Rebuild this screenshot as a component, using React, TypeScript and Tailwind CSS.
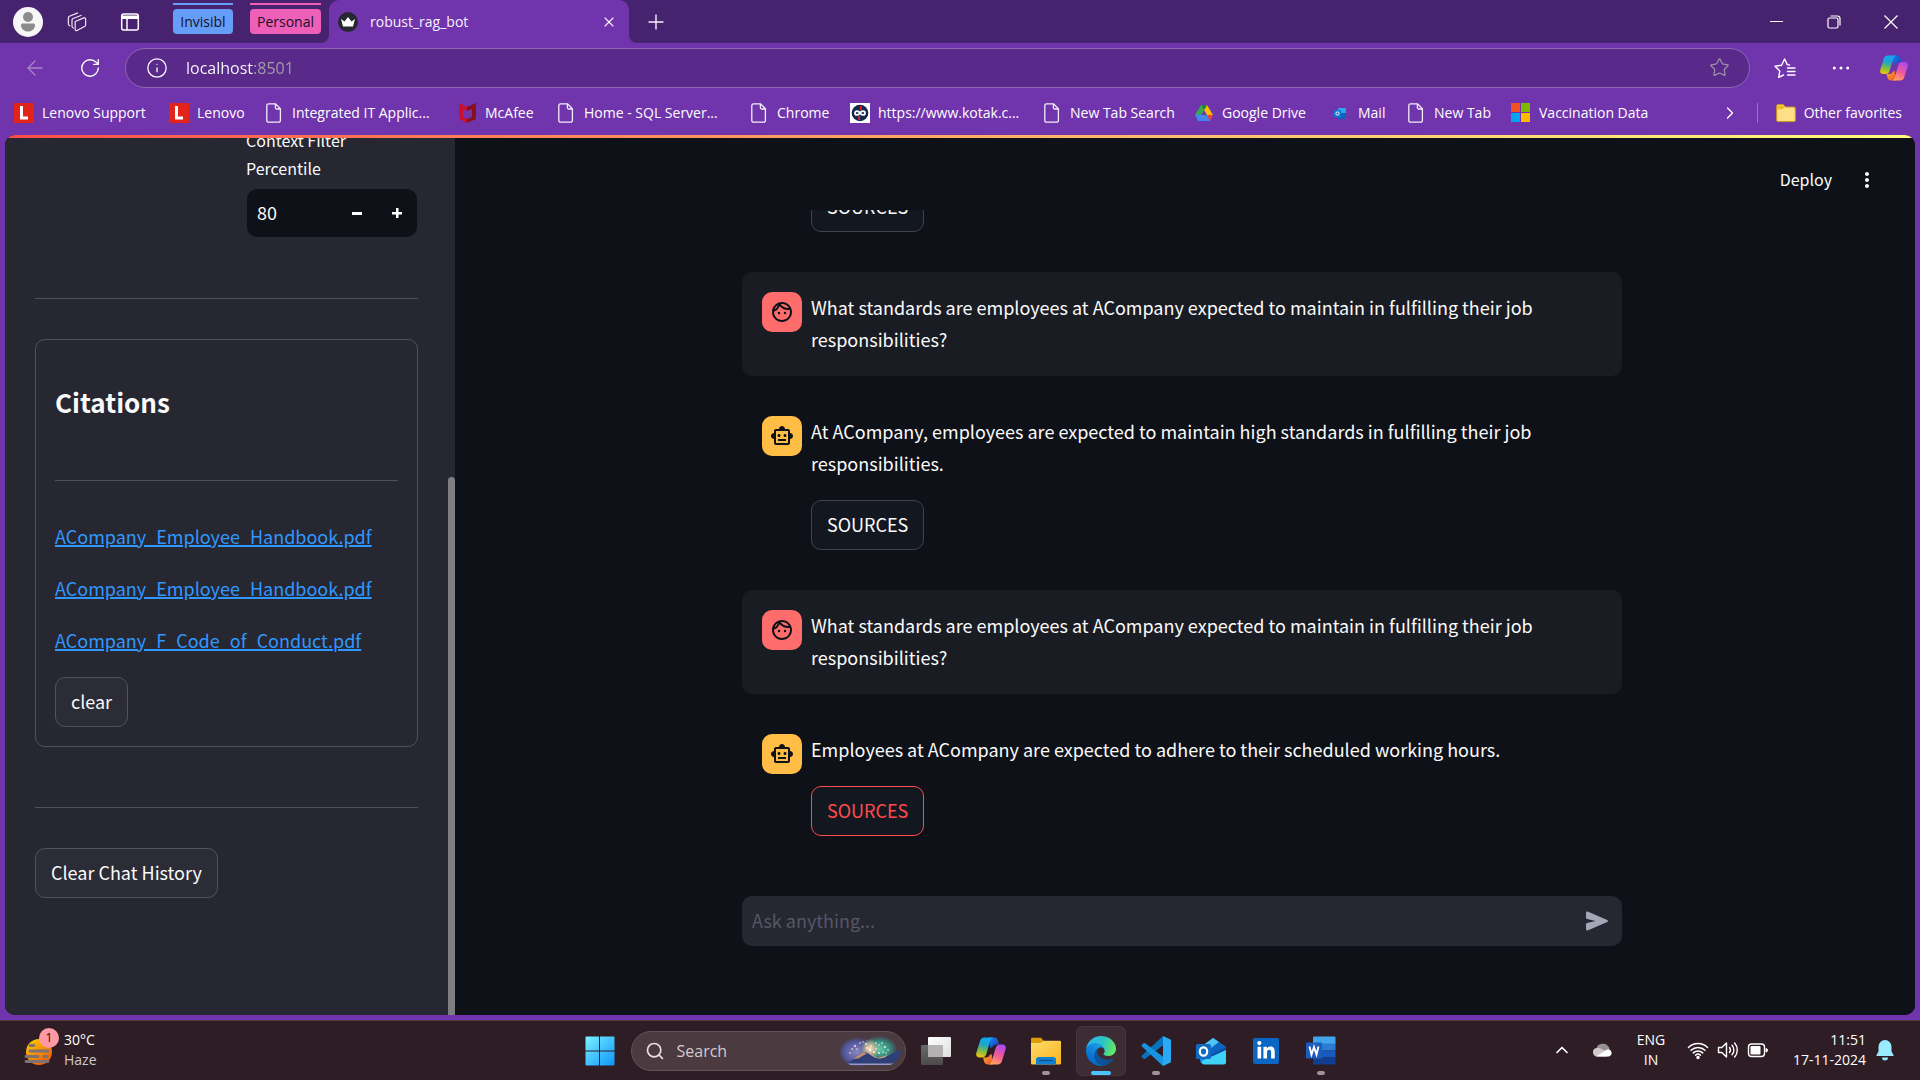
import React from "react";
import { ArrowLeft, ChevronRight, ChevronUp, Info, Plus, RotateCw, Search, Star, X } from "lucide-react";
import { MdMoreVert, MdOutlineFace, MdOutlineSmartToy } from "react-icons/md";
import { FaLinkedinIn } from "react-icons/fa";

const UI = "font-['Open_Sans','Noto_Sans',sans-serif]";
const APP = "font-['Noto_Sans_CJK_SC',sans-serif]";

/* ---------- drawings ---------- */

function DocIcon() {
  return (
    <svg width="20" height="20" viewBox="0 0 20 20" fill="none" stroke="#f4eefa" strokeWidth="1.3">
      <path d="M4.6 .8h7l4.8 5v11.6a1.8 1.8 0 0 1-1.8 1.8h-10a1.8 1.8 0 0 1-1.8-1.8V2.6A1.8 1.8 0 0 1 4.6 .8z" />
      <path d="M11.4 1v3.6a1.4 1.4 0 0 0 1.4 1.4h3.6" />
    </svg>
  );
}

function LenovoIcon() {
  return (
    <svg width="20" height="20" viewBox="0 0 20 20">
      <rect width="20" height="20" fill="#e2231a" />
      <path d="M6 3h3v10.500h5V16.500H6z" fill="#fff" />
    </svg>
  );
}

function McAfeeIcon() {
  return (
    <svg width="20" height="20" viewBox="0 0 20 20">
      <path d="M2.500 0 10 4v4L6 6v8l4 2v4l-7.500-4z" fill="#c8102e" />
      <path d="M19 0l-9 4v4l5-2v8l-5 2v4l9-4z" fill="#8a0f1c" />
    </svg>
  );
}

function KotakIcon() {
  return (
    <svg width="20" height="20" viewBox="0 0 20 20">
      <rect width="20" height="20" fill="#fff" />
      <circle cx="10" cy="10" r="8.300" fill="#14284f" />
      <path d="M10 10c-1.500-2.600-5-2.600-5 0s3.500 2.600 5 0 5-2.600 5 0-3.500 2.600-5 0z" fill="none" stroke="#fff" strokeWidth="1.800" />
      <path d="M10.800 3v4M9.200 13v4" stroke="#ed1c24" strokeWidth="1.800" />
    </svg>
  );
}

function DriveIcon() {
  return (
    <svg width="20" height="20" viewBox="0 0 20 20">
      <path d="M7 2h6l-3 5.200-5.500 10L1 12z" fill="#34a853" />
      <path d="M7 2h6l6 10h-6z" fill="#fbbc04" />
      <path d="M7 2h6l-3 5.200z" fill="#188038" />
      <path d="M1 12h18l-3.300 6H4.300z" fill="#4285f4" />
      <path d="M13 12h6l-3.300 6z" fill="#ea4335" />
    </svg>
  );
}

function MailIcon() {
  return (
    <svg width="20" height="20" viewBox="0 0 20 20">
      <rect x="8" y="5" width="8" height="11" rx="1" fill="#28a8ea" />
      <path d="M8 10h8v5a1 1 0 0 1-1 1H8z" fill="#0a64b8" />
      <rect x="4" y="7" width="7" height="7" rx="1" fill="#0f78d4" />
      <circle cx="7.500" cy="10.500" r="1.600" fill="none" stroke="#fff" strokeWidth="1" />
    </svg>
  );
}

function MicrosoftIcon() {
  return (
    <svg width="20" height="20" viewBox="0 0 20 20">
      <path d="M0 0h9v9H0z" fill="#f25022" />
      <path d="M10 0h9v9h-9z" fill="#7fba00" />
      <path d="M0 10h9v9H0z" fill="#00a4ef" />
      <path d="M10 10h9v9h-9z" fill="#ffb900" />
    </svg>
  );
}

function FavoritesFolderIcon() {
  return (
    <svg width="20" height="20" viewBox="0 0 20 20">
      <path d="M.7 3A1.500 1.500 0 0 1 2.200 1.500h5L9.300 4H18a1.300 1.300 0 0 1 1.300 1.300v12A1.300 1.300 0 0 1 18 18.600H2a1.300 1.300 0 0 1-1.300-1.300z" fill="#ffdf85" stroke="#c99a12" strokeWidth="1" />
      <path d="M1.200 2.600h5.600l1.700 2-2 1.700H1.200z" fill="#efb92b" />
    </svg>
  );
}

function CopilotIcon({ size }: { size: number }) {
  const id = "cp" + size;
  return (
    <svg width={size} height={size} viewBox="0 0 30 30">
      <defs>
        <linearGradient id={id + "a"} x1="0.400" y1="0" x2="0.200" y2="1">
          <stop offset="0" stopColor="#12a6f2" />
          <stop offset=".35" stopColor="#1fa5c9" />
          <stop offset=".65" stopColor="#78bd49" />
          <stop offset="1" stopColor="#f7c700" />
        </linearGradient>
        <linearGradient id={id + "b"} x1="0.700" y1="0" x2="0.300" y2="1">
          <stop offset="0" stopColor="#a94bf0" />
          <stop offset=".5" stopColor="#f0569b" />
          <stop offset="1" stopColor="#ffa35c" />
        </linearGradient>
        <linearGradient id={id + "c"} x1="0" y1="0" x2="1" y2="1">
          <stop offset="0" stopColor="#1483e8" />
          <stop offset="1" stopColor="#1a3fc4" />
        </linearGradient>
        <linearGradient id={id + "d"} x1="0" y1="0" x2="1" y2="1">
          <stop offset="0" stopColor="#f9b11f" />
          <stop offset="1" stopColor="#ee4b3a" />
        </linearGradient>
      </defs>
      <path d="M13 1.500h5.500a3.500 3.500 0 0 1 3.300 2.500L23 8.500h-3a4 4 0 0 0-3.700 2.600l-2 1z" fill={"url(#" + id + "c)"} />
      <path d="M17 28.500h-5.500a3.500 3.500 0 0 1-3.300-2.500L7 21.500h3a4 4 0 0 0 3.700-2.600l2-1z" fill={"url(#" + id + "d)"} />
      <path d="M8.500 1.500h9c-1.700.4-2.700 1.800-3.300 3.700L10.300 18c-.7 2.300-1.800 3.500-4.300 3.500H3.500C.6 21.500-.3 19.200.4 16.700L4 5C4.800 2.700 6 1.500 8.500 1.500z" fill={"url(#" + id + "a)"} />
      <path d="M21.500 28.500h-9c1.700-.4 2.700-1.800 3.300-3.700L19.700 12c.7-2.300 1.800-3.500 4.300-3.500h2.500c2.900 0 3.800 2.300 3.100 4.800L26 25c-.8 2.300-2 3.500-4.500 3.500z" fill={"url(#" + id + "b)"} />
    </svg>
  );
}

function EdgeIcon() {
  return (
    <svg width="30" height="30" viewBox="0 0 256 256">
      <defs>
        <linearGradient id="ea" x1="60" y1="178" x2="242" y2="178" gradientUnits="userSpaceOnUse">
          <stop offset="0" stopColor="#0c59a4" />
          <stop offset="1" stopColor="#114a8b" />
        </linearGradient>
        <linearGradient id="eb" x1="150" y1="90" x2="50" y2="240" gradientUnits="userSpaceOnUse">
          <stop offset="0" stopColor="#1b9de2" />
          <stop offset=".5" stopColor="#0f80d8" />
          <stop offset="1" stopColor="#0067c8" />
        </linearGradient>
        <linearGradient id="ec" x1="20" y1="60" x2="250" y2="140" gradientUnits="userSpaceOnUse">
          <stop offset="0" stopColor="#2fb6ee" />
          <stop offset=".5" stopColor="#2bc3c4" />
          <stop offset="1" stopColor="#66eb5e" />
        </linearGradient>
      </defs>
      <g transform="translate(-4.630 -4.920)">
        <path fill="url(#ea)" d="M235.680 195.460a93.730 93.730 0 0 1-10.540 4.710 101.870 101.870 0 0 1-35.900 6.460c-47.320 0-88.540-32.550-88.540-74.320A31.480 31.480 0 0 1 117.130 105c-42.800 1.800-53.800 46.400-53.800 72.530 0 73.880 68.090 81.370 82.760 81.370 7.910 0 19.840-2.300 27-4.560l1.310-.44a128.340 128.340 0 0 0 66.600-52.800 4 4 0 0 0-5.320-5.640Z" />
        <path fill="url(#eb)" d="M110.340 246.340A79.200 79.200 0 0 1 87.600 225a80.720 80.720 0 0 1 29.530-120c3.120-1.470 8.450-4.130 15.540-4a32.350 32.350 0 0 1 25.690 13 31.880 31.880 0 0 1 6.360 18.660c0-.21 24.460-79.600-80-79.600-43.900 0-80 41.660-80 78.210a130.150 130.150 0 0 0 12.110 56 128 128 0 0 0 156.380 67.110 75.550 75.550 0 0 1-62.780-8Z" />
        <path fill="url(#ec)" d="M156.940 153.780c-.81 1.050-3.300 2.500-3.300 5.660 0 2.610 1.700 5.120 4.720 7.230 14.380 10 41.490 8.680 41.560 8.680a59.560 59.560 0 0 0 30.270-8.350 61.380 61.380 0 0 0 30.430-52.880c.26-22.410-8-37.310-11.340-43.910-21.190-41.440-66.920-65.280-116.670-65.280a128 128 0 0 0-128 126.200c.48-36.540 36.800-66.050 80-66.050 3.500 0 23.460.34 42 10.070 16.340 8.580 24.900 18.940 30.850 29.210 6.180 10.670 7.280 24.150 7.280 29.520s-2.740 13.330-7.800 19.900Z" />
      </g>
    </svg>
  );
}

function WindowsIcon() {
  return (
    <svg width="30" height="30" viewBox="0 0 30 30">
      <defs>
        <linearGradient id="win" x1="0" y1="0" x2="30" y2="30" gradientUnits="userSpaceOnUse">
          <stop offset="0" stopColor="#7df3ff" />
          <stop offset="1" stopColor="#0a93fb" />
        </linearGradient>
      </defs>
      <path fill="url(#win)" d="M1.500.5H14v14H.5v-13a1 1 0 0 1 1-1zM15 .5h13.500a1 1 0 0 1 1 1v13H15zM.5 15.500H14v14H1.500a1 1 0 0 1-1-1zM15 15.500h14.500v13a1 1 0 0 1-1 1H15z" />
    </svg>
  );
}

function TaskViewIcon() {
  return (
    <svg width="30" height="30" viewBox="0 0 30 30">
      <defs>
        <linearGradient id="tvb" x1="0" y1="0" x2="0" y2="1">
          <stop offset="0" stopColor="#6a6869" />
          <stop offset="1" stopColor="#4c4a4b" />
        </linearGradient>
        <linearGradient id="tvf" x1="0" y1="0" x2="1" y2="1">
          <stop offset="0" stopColor="#ffffff" />
          <stop offset="1" stopColor="#dedede" />
        </linearGradient>
      </defs>
      <rect x="0" y="9" width="22" height="20" rx="1" fill="url(#tvb)" />
      <rect x="7" y="1" width="23" height="20" rx="1" fill="url(#tvf)" />
      <rect x="7" y="9" width="15" height="12" fill="#b3b1b2" />
    </svg>
  );
}

function ExplorerIcon() {
  return (
    <svg width="30" height="30" viewBox="0 0 30 30">
      <defs>
        <linearGradient id="fold" x1="0" y1="0" x2="1" y2="1">
          <stop offset="0" stopColor="#ffdc6b" />
          <stop offset="1" stopColor="#f9b41c" />
        </linearGradient>
      </defs>
      <path d="M0 3a1.200 1.200 0 0 1 1.200-1.200H10l3 3.400V10H0z" fill="#dd9b0a" />
      <path d="M0 7h9.500l3-2.200h16.300A1.200 1.200 0 0 1 30 6v21.300a1.200 1.200 0 0 1-1.200 1.200H1.200A1.200 1.200 0 0 1 0 27.300z" fill="url(#fold)" />
      <path d="M5 28.500v-5a2.500 2.500 0 0 1 2.500-2.500h15a2.500 2.500 0 0 1 2.500 2.500v5z" fill="#1180cf" />
      <path d="M8.500 24.500h13" stroke="#0a4f8c" strokeWidth="1.200" />
    </svg>
  );
}

function VsCodeIcon() {
  return (
    <svg width="30" height="30" viewBox="0 0 30 30">
      <path d="M22 0 1 19.500a1.200 1.200 0 0 0 0 1.800l1.500 1.400a1.400 1.400 0 0 0 1.700.1L22.500 9z" fill="#0873bd" />
      <path d="M22 30 1 10.500a1.200 1.200 0 0 1 0-1.800l1.500-1.400a1.400 1.400 0 0 1 1.700-.1L22.500 21z" fill="#1793e0" />
      <path d="M22 0l7 3.200a1.600 1.600 0 0 1 1 1.500v20.600a1.600 1.600 0 0 1-1 1.500L22 30z" fill="#2aa9f4" />
    </svg>
  );
}

function OutlookIcon() {
  return (
    <svg width="30" height="30" viewBox="0 0 30 30">
      <path d="M4 12 17 2l13 9v14a3 3 0 0 1-3 3H8a4 4 0 0 1-4-4z" fill="#1487dd" />
      <path d="M6 10 17 2l6 4L9 16z" fill="#4fc4f2" />
      <path d="M23 6l7 5-15 10-3-6z" fill="#0c63bf" />
      <path d="M30 11v4L17 23l-3-3z" fill="#0a48a0" />
      <path d="M30 14v12a2.500 2.500 0 0 1-2.500 2.500H8C5 28 5 24 8 24z" fill="#3fd2f7" />
      <rect x="0" y="8" width="15" height="15" rx="1.500" fill="#0f6cc4" />
      <ellipse cx="7.500" cy="15.500" rx="3.700" ry="4.200" fill="none" stroke="#fff" strokeWidth="2.200" />
    </svg>
  );
}

function WordIcon() {
  return (
    <svg width="30" height="30" viewBox="0 0 30 30">
      <path d="M7 1.500A1 1 0 0 1 8 .5h20.500a1 1 0 0 1 1 1V8H7z" fill="#41a5ee" />
      <path d="M7 7.500h22.500v7H7z" fill="#2b7cd3" />
      <path d="M7 14.500h22.500v7H7z" fill="#185abd" />
      <path d="M7 21.500h22.500v6a1 1 0 0 1-1 1H8a1 1 0 0 1-1-1z" fill="#103f91" />
      <rect x="0" y="6.500" width="16" height="16" rx="1.200" fill="#1b5cbe" />
      <path d="M3.500 10.500l2 8 2.500-7.500 2.500 7.500 2-8" fill="none" stroke="#fff" strokeWidth="1.900" />
    </svg>
  );
}

function SkylineArt() {
  return (
    <svg width="62" height="32" viewBox="0 0 62 32">
      <defs>
        <radialGradient id="s1" cx=".45" cy=".5" r=".52">
          <stop offset="0" stopColor="#8a86bd" />
          <stop offset=".65" stopColor="#5358a0" />
          <stop offset="1" stopColor="#4a4a8c" stopOpacity="0" />
        </radialGradient>
        <radialGradient id="s2" cx=".5" cy=".5" r=".52">
          <stop offset="0" stopColor="#62cba6" />
          <stop offset=".6" stopColor="#358a7c" />
          <stop offset="1" stopColor="#35777c" stopOpacity="0" />
        </radialGradient>
        <radialGradient id="s3" cx=".5" cy=".5" r=".5">
          <stop offset="0" stopColor="#ffe3c0" />
          <stop offset=".5" stopColor="#d9b59c" stopOpacity=".8" />
          <stop offset="1" stopColor="#d9b59c" stopOpacity="0" />
        </radialGradient>
      </defs>
      <ellipse cx="19" cy="17" rx="19" ry="15" fill="url(#s1)" />
      <ellipse cx="39" cy="14" rx="18" ry="13" fill="url(#s2)" />
      <ellipse cx="30" cy="14" rx="9" ry="10" fill="url(#s3)" />
      <path d="M28 18l10 5 10-3-6 5H28z" fill="#e3a07a" />
      <path d="M7 29c7-5 11-9 18-12 6 2 9 7 15 6.500S51 18 61 15c0 7-4 13-12 14H14z" fill="#2f3f78" />
      <path d="M13 24c4-3 7-5 11-7l3 1.500-9 5z" fill="#c08c72" />
      <path d="M8 28.500h46l-4 1.500H10z" fill="#9a97c8" />
      <g fill="#fff6e6">
        <circle cx="10" cy="18" r=".8" /><circle cx="12" cy="14" r=".8" /><circle cx="15" cy="11" r=".9" /><circle cx="17" cy="14" r=".7" />
        <circle cx="20" cy="8" r=".8" /><circle cx="23" cy="7" r=".7" /><circle cx="26" cy="9" r=".9" /><circle cx="27" cy="13" r="1" />
        <circle cx="30" cy="15" r="1.200" /><circle cx="31" cy="11" r=".8" /><circle cx="34" cy="17" r="1" /><circle cx="36" cy="8" r=".8" />
        <circle cx="39" cy="10" r=".8" /><circle cx="42" cy="8" r=".8" /><circle cx="45" cy="12" r=".9" /><circle cx="48" cy="15" r=".8" />
        <circle cx="39" cy="18" r=".9" /><circle cx="43" cy="17" r=".8" /><circle cx="36" cy="14" r=".8" /><circle cx="46" cy="18" r=".7" />
      </g>
    </svg>
  );
}

function WeatherIcon() {
  return (
    <svg width="32" height="38" viewBox="0 0 32 38">
      <defs>
        <linearGradient id="haze" x1="0" y1="0" x2=".7" y2="1">
          <stop offset="0" stopColor="#ffd400" />
          <stop offset="1" stopColor="#ea5a0c" />
        </linearGradient>
      </defs>
      <circle cx="15" cy="21" r="13" fill="url(#haze)" />
      <path d="M6 14.500h4M6 20h18M2 25.500h12M20 25.500h3M2 30.500h22" stroke="#7d7270" strokeWidth="2.800" strokeLinecap="round" />
    </svg>
  );
}

function WorkspacesIcon() {
  return (
    <svg width="22" height="22" viewBox="0 0 22 22" fill="none" stroke="#efe8f5" strokeWidth="1.300" strokeLinejoin="round">
      <path d="M9 10.500l9.500-4a1.300 1.300 0 0 1 2 1.200v6.500a2 2 0 0 1-1.200 1.800L11 20.300a1.300 1.300 0 0 1-2-1.200z" />
      <path d="M5.500 16.500V9a2 2 0 0 1 1.200-1.800L16 3.500" />
      <path d="M1.500 14V6.500a2 2 0 0 1 1.200-1.800L12 1" />
      <path d="M1.500 14l2 1.500M5.500 16.500l2 1.500" />
    </svg>
  );
}

function TabActionsIcon() {
  return (
    <svg width="20" height="20" viewBox="0 0 20 20" fill="none">
      <rect x="1.700" y="2" width="16.600" height="16" rx="2" stroke="#fff" strokeWidth="1.500" />
      <path d="M2 3.500h16v3.500H2z" fill="#fff" />
      <path d="M7 6v12" stroke="#fff" strokeWidth="1.500" />
    </svg>
  );
}

function FavoritesListIcon() {
  return (
    <svg width="22" height="22" viewBox="0 0 22 22" fill="none" stroke="#fff" strokeWidth="1.400" strokeLinejoin="round" strokeLinecap="round">
      <path d="M15.500 8 13.300 7.600 10.600 2 7.600 8.200 1 9.200l4.800 4.700L4.700 20.400l4.800-2.400" />
      <path d="M13.500 11h7.500M13.500 14.500h7.500M13.500 18h7.500" />
    </svg>
  );
}

function WifiIcon() {
  return (
    <svg width="22" height="20" viewBox="0 0 22 20" fill="none" stroke="#fff" strokeWidth="1.500" strokeLinecap="round">
      <path d="M1.500 7.500a13.500 13.500 0 0 1 19 0M4 10.300a10 10 0 0 1 14 0M6.300 12.900a6.600 6.600 0 0 1 9.400 0M8.600 15.200a3.400 3.400 0 0 1 4.800 0" />
      <circle cx="11" cy="17.500" r="1" fill="#fff" />
    </svg>
  );
}

function VolumeIcon() {
  return (
    <svg width="22" height="20" viewBox="0 0 22 20" fill="none" stroke="#fff" strokeWidth="1.400" strokeLinecap="round" strokeLinejoin="round">
      <path d="M1.500 7.500h3.300L9.500 3v14l-4.700-4.500H1.500z" />
      <path d="M12.500 7.500a4 4 0 0 1 0 5M15 5.200a7 7 0 0 1 0 9.600M17.600 3a10.500 10.500 0 0 1 0 14" />
    </svg>
  );
}

function BatteryIcon() {
  return (
    <svg width="22" height="20" viewBox="0 0 22 20">
      <rect x="1.500" y="4" width="16" height="12.500" rx="3" fill="none" stroke="#fff" strokeWidth="1.400" />
      <rect x="3.500" y="6" width="10" height="8.500" rx="1.300" fill="#fff" />
      <path d="M19 8.500c2 0 2 3.500 0 3.500z" fill="#fff" stroke="#fff" />
    </svg>
  );
}

function CloudIcon() {
  return (
    <svg width="22" height="20" viewBox="0 0 22 20">
      <path d="M4.500 9a6.500 6 0 0 1 12.500-1.500l1 3-7 5H5z" fill="#98908f" />
      <path d="M5 16.500a4.300 4.300 0 0 1-.6-8.500c2.600-.5 4.200.5 6 1.800L18 12l-3 4.500z" fill="#cfcaca" />
      <path d="M4 16.500l8.800-5.400c1.200-1.200 2.700-2 4.300-1.500a3.600 3.600 0 0 1 0 6.900z" fill="#fff" />
    </svg>
  );
}

function BellIcon() {
  return (
    <svg width="20" height="22" viewBox="0 0 20 22">
      <path d="M10 1a6.500 6.500 0 0 1 6.500 6.500v5L18.500 16v1h-17v-1l2-3.500v-5A6.500 6.500 0 0 1 10 1z" fill="#99ebff" />
      <path d="M7 18.500h6a3 3 0 0 1-6 0z" fill="#99ebff" />
    </svg>
  );
}

function SendIcon() {
  return (
    <svg width="26" height="26" viewBox="0 0 26 26">
      <path d="M2 5.200c0-1.400 1-2 2.200-1.500l19 8.200c1 .4 1 1.800 0 2.200l-19 8.200c-1.200.5-2.200-.1-2.200-1.500v-4.500c0-.6.4-1.100 1-1.200L11.500 13 3 10.900c-.6-.1-1-.6-1-1.200z" fill="#a3a8b8" />
    </svg>
  );
}

/* ---------- browser chrome ---------- */

function TabStrip() {
  return (
    <header className="flex h-[43px] shrink-0 items-center bg-[#47226e] text-[#f7f2fb]">
      <button aria-label="Profile" className="ml-[13px] flex size-[30px] items-center justify-center rounded-full bg-[#f7f7f7]">
        <svg width="16" height="22" viewBox="0 0 16 22" fill="#8c8c8c">
          <circle cx="8" cy="6" r="5" />
          <path d="M2.500 12.500h11A1.500 1.500 0 0 1 15 14c0 4-3 6.500-7 6.500S1 18 1 14a1.500 1.500 0 0 1 1.500-1.500z" />
        </svg>
      </button>
      <button aria-label="Workspaces" className="ml-6 flex w-5 justify-center"><WorkspacesIcon /></button>
      <button aria-label="Tab actions" className="ml-[33px]"><TabActionsIcon /></button>
      <button className="ml-[33px] flex h-full w-[60px] flex-col pt-[3px] text-[14px] text-[#16102a]">
        <span className="h-[2px] w-full bg-[#669df6]" />
        <span className="mt-1 flex h-[25px] w-full items-center justify-center rounded bg-[#669df6]">Invisibl</span>
      </button>
      <button className="ml-[17px] flex h-full w-[71px] flex-col pt-[3px] text-[14px] text-[#16102a]">
        <span className="h-[2px] w-full bg-[#ee5fb7]" />
        <span className="mt-1 flex h-[25px] w-full items-center justify-center rounded bg-[#ee5fb7]">Personal</span>
      </button>
      <div className="h-full w-2 bg-[#7034ad]">
        <div className="h-full rounded-br-lg bg-[#47226e]" />
      </div>
      <div className="h-full w-[300px] bg-[#47226e]">
        <div className="flex h-full items-center rounded-t-[10px] bg-[#7034ad] pl-[9px] pr-3">
          <span className="flex size-5 items-center justify-center rounded-full bg-[#26272f]">
            <svg width="14" height="10" viewBox="0 0 14 10" fill="#fff"><path d="M0 2l3.500 2.500L7 0l3.500 4.500L14 2l-2 7.500H2z" /></svg>
          </span>
          <span className="ml-3 text-[14px]">robust_rag_bot</span>
          <button aria-label="Close tab" className="ml-auto"><X size={16} strokeWidth={1.7} /></button>
        </div>
      </div>
      <div className="h-full w-2 bg-[#7034ad]">
        <div className="h-full rounded-bl-lg bg-[#47226e]" />
      </div>
      <button aria-label="New tab" className="ml-[7px]"><Plus size={24} strokeWidth={1.4} /></button>
      <div className="ml-auto flex h-full">
        <button aria-label="Minimize" className="flex w-[57px] items-center justify-center"><span className="h-px w-[13px] bg-white" /></button>
        <button aria-label="Restore" className="flex w-[57px] items-center justify-center">
          <svg width="14" height="14" viewBox="0 0 14 14" fill="none" stroke="#fff" strokeWidth="1.200">
            <rect x="1" y="3" width="10" height="10" rx="1.500" />
            <path d="M3.500 1h7A2.500 2.500 0 0 1 13 3.500v7" />
          </svg>
        </button>
        <button aria-label="Close window" className="flex w-[58px] items-center justify-center">
          <svg width="14" height="14" viewBox="0 0 14 14" stroke="#fff" strokeWidth="1.200"><path d="M.5.5l13 13M13.500.5l-13 13" /></svg>
        </button>
      </div>
    </header>
  );
}

function AddressRow() {
  return (
    <div className="flex h-[49px] shrink-0 items-center pr-3 text-white">
      <button aria-label="Back" className="ml-[23px] text-[#a687c8]"><ArrowLeft size={24} strokeWidth={1.300} /></button>
      <button aria-label="Refresh" className="ml-8"><RotateCw size={22} strokeWidth={1.500} /></button>
      <div className="ml-6 flex h-10 flex-1 items-center rounded-full border border-[#8c69b2] bg-[#592a8a] pl-5 pr-[19px]">
        <Info size={22} strokeWidth={1.400} />
        <input
          aria-label="Address"
          defaultValue="localhost:8501"
          className="ml-[18px] min-w-0 flex-1 bg-[linear-gradient(90deg,#fff_68px,#a5a1a8_68px)] bg-clip-text text-[16px] leading-6 text-transparent outline-none"
        />
        <button aria-label="Add to favorites" className="text-[#9f93a8]"><Star size={21} strokeWidth={1.400} /></button>
      </div>
      <button aria-label="Favorites" className="ml-6"><FavoritesListIcon /></button>
      <button aria-label="Settings and more" className="ml-9">
        <svg width="18" height="6" viewBox="0 0 18 6" fill="#fff"><circle cx="2.300" cy="3" r="1.500" /><circle cx="9" cy="3" r="1.500" /><circle cx="15.700" cy="3" r="1.500" /></svg>
      </button>
      <button aria-label="Copilot" className="ml-[30px]"><CopilotIcon size={28} /></button>
    </div>
  );
}

const bookmarks = [
  { label: "Lenovo Support", icon: <LenovoIcon />, width: "w-[155px]" },
  { label: "Lenovo", icon: <LenovoIcon />, width: "w-[95px]" },
  { label: "Integrated IT Applic...", icon: <DocIcon />, width: "w-[193px]" },
  { label: "McAfee", icon: <McAfeeIcon />, width: "w-[99px]" },
  { label: "Home - SQL Server...", icon: <DocIcon />, width: "w-[193px]" },
  { label: "Chrome", icon: <DocIcon />, width: "w-[101px]" },
  { label: "https://www.kotak.c...", icon: <KotakIcon />, width: "w-[192px]" },
  { label: "New Tab Search", icon: <DocIcon />, width: "w-[152px]" },
  { label: "Google Drive", icon: <DriveIcon />, width: "w-[136px]" },
  { label: "Mail", icon: <MailIcon />, width: "w-[76px]" },
  { label: "New Tab", icon: <DocIcon />, width: "w-[105px]" },
  { label: "Vaccination Data", icon: <MicrosoftIcon />, width: "w-[150px]" },
];

function BookmarksBar() {
  return (
    <nav aria-label="Favorites bar" className="flex h-[43px] shrink-0 items-center pb-[2px] pl-[14px] pr-[18px] text-[14px] text-white">
      {bookmarks.map((b) => (
        <a key={b.label} href="#" className={"flex shrink-0 items-center gap-2 whitespace-nowrap " + b.width}>
          {b.icon}
          {b.label}
        </a>
      ))}
      <button aria-label="More favorites" className="ml-auto mr-[17px]"><ChevronRight size={20} strokeWidth={1.500} /></button>
      <span className="h-5 w-px bg-[#9a72c6]" />
      <a href="#" className="ml-[18px] flex items-center gap-2 whitespace-nowrap"><FavoritesFolderIcon />Other favorites</a>
    </nav>
  );
}

/* ---------- page ---------- */

const sideButton = "flex h-[50px] items-center rounded-[10px] border border-[#51525a] bg-[#2b2c36] px-[15px] pb-[2px] text-[18px]";

const citations = ["ACompany_Employee_Handbook.pdf", "ACompany_Employee_Handbook.pdf", "ACompany_F_Code_of_Conduct.pdf"];

function Sidebar() {
  return (
    <aside className="flex w-[450px] shrink-0 bg-[#262730]">
      <div className="flex min-h-0 flex-1 flex-col justify-end overflow-hidden pb-[117px] pl-[30px] pr-[30px]">
        <div className="w-[172px] shrink-0 self-end">
          <label htmlFor="percentile" className="block text-[16px] leading-7">Context Filter<br />Percentile</label>
          <div className="mx-px mt-[7px] flex h-12 items-center rounded-[10px] bg-[#0e1117] pl-[10px]">
            <input id="percentile" defaultValue="80" className="min-w-0 flex-1 bg-transparent pb-[2px] text-[18px] outline-none" />
            <button aria-label="Decrease" className="flex h-full w-10 items-center justify-center"><span className="h-[3px] w-[10px] bg-white" /></button>
            <button aria-label="Increase" className="flex h-full w-10 items-center justify-center">
              <svg width="10" height="10" viewBox="0 0 10 10" fill="#fff"><path d="M4 0h2.500v4H10v2.500H6.500V10H4V6.500H0V4h4z" /></svg>
            </button>
          </div>
        </div>
        <hr className="mt-[61px] shrink-0 border-[#4f5058]" />
        <section className="mt-10 shrink-0 rounded-[10px] border border-[#4f5058] px-[19px] pb-[19px] pt-[41px]">
          <h2 className="text-[26px] font-bold leading-[42px]">Citations</h2>
          <hr className="mt-[57px] border-[#4f5058]" />
          <ul className="mt-[39px] flex flex-col gap-5 text-[18px] leading-8">
            {citations.map((name, i) => (
              <li key={i}><a href="#" className="text-[#3097ff] underline decoration-2">{name}</a></li>
            ))}
          </ul>
          <button className={"mt-[21px] " + sideButton}>clear</button>
        </section>
        <hr className="mt-[60px] shrink-0 border-[#4f5058]" />
        <button className={"mt-10 shrink-0 self-start " + sideButton}>Clear Chat History</button>
      </div>
      <div className="flex w-[7px] flex-col justify-end">
        <div className="h-[538px] rounded-t bg-[#7e7d82]" />
      </div>
    </aside>
  );
}

type Message = { from: "user" | "bot"; text: string; active?: boolean };

const question = "What standards are employees at ACompany expected to maintain in fulfilling their job responsibilities?";

const messages: Message[] = [
  { from: "bot", text: "" },
  { from: "user", text: question },
  { from: "bot", text: "At ACompany, employees are expected to maintain high standards in fulfilling their job responsibilities." },
  { from: "user", text: question },
  { from: "bot", text: "Employees at ACompany are expected to adhere to their scheduled working hours.", active: true },
];

function MessageRow({ from, text, active }: Message) {
  const user = from === "user";
  return (
    <article className={"flex shrink-0 gap-[9px] rounded-[10px] p-5 " + (user ? "bg-[#1a1c24]" : "")}>
      <span className={"flex size-10 shrink-0 items-center justify-center rounded-[10px] text-[#0e1117] " + (user ? "bg-[#ff6c6c]" : "bg-[#ffbd45]")}>
        {user ? <MdOutlineFace size={24} /> : <MdOutlineSmartToy size={24} />}
      </span>
      <div className="-mt-px min-w-0 flex-1">
        <p className="text-[18px] leading-8">{text}</p>
        {!user && (
          <button
            className={
              "mt-[21px] flex h-[50px] items-center rounded-[10px] border bg-[#131720] px-[15px] pb-[2px] text-[18px] " +
              (active ? "border-[#ff4b4b] text-[#ff4b4b]" : "border-[#41434a]")
            }
          >
            SOURCES
          </button>
        )}
        {user && <span className="block h-px" />}
      </div>
    </article>
  );
}

function Chat() {
  return (
    <main className="flex min-w-0 flex-1 flex-col bg-[#0e1117]">
      <div className="flex h-[72px] shrink-0 items-center justify-end pr-9 pt-3">
        <button className="pb-[2px] text-[16px] leading-6">Deploy</button>
        <button aria-label="Main menu" className="ml-[23px]"><MdMoreVert size={24} /></button>
      </div>
      <div className="flex min-h-0 flex-1 flex-col justify-end overflow-hidden pb-10 pr-[6px]">
        <div className="mx-auto flex w-full max-w-[880px] flex-col gap-5">
          {messages.map((m, i) => <MessageRow key={i} {...m} />)}
        </div>
      </div>
      <div className="shrink-0 pb-[69px] pr-[6px]">
        <div className="mx-auto flex h-[50px] w-full max-w-[880px] items-center rounded-[10px] bg-[#262730] pl-[10px] pr-3">
          <input aria-label="Ask anything" placeholder="Ask anything..." className="min-w-0 flex-1 bg-transparent pb-[2px] text-[18px] outline-none placeholder:text-[#555867]" />
          <button aria-label="Send"><SendIcon /></button>
        </div>
      </div>
    </main>
  );
}

/* ---------- taskbar ---------- */

const apps = [
  { name: "Task view", icon: <TaskViewIcon />, mark: "" },
  { name: "Copilot", icon: <CopilotIcon size={30} />, mark: "" },
  { name: "File Explorer", icon: <ExplorerIcon />, mark: "dot" },
  { name: "Edge", icon: <EdgeIcon />, mark: "active" },
  { name: "Visual Studio Code", icon: <VsCodeIcon />, mark: "dot" },
  { name: "Outlook", icon: <OutlookIcon />, mark: "" },
  {
    name: "LinkedIn",
    icon: <span className="flex size-[26px] items-center justify-center rounded-[2px] bg-[#0a66c2] text-white"><FaLinkedinIn size={20} /></span>,
    mark: "",
  },
  { name: "Word", icon: <WordIcon />, mark: "dot" },
];

function Taskbar() {
  return (
    <footer className="flex h-[60px] shrink-0 items-stretch border-t border-[#4c3c40] bg-[#2f1d25] text-white">
      <div className="flex min-w-0 flex-1 items-center pb-px pl-6">
        <div className="relative">
          <WeatherIcon />
          <span className="absolute -top-[3px] left-[15px] flex size-5 items-center justify-center rounded-full bg-[#ff99a4] text-[13px] text-[#2a1418]">1</span>
        </div>
        <div className="ml-2 text-[14px] leading-5">
          <div>30°C</div>
          <div className="text-[#cfc8ca]">Haze</div>
        </div>
      </div>
      <div className="flex shrink-0 items-center pl-[2px]">
        <button aria-label="Start" className="flex w-[55px] justify-center"><WindowsIcon /></button>
        <div className="ml-[3px] mr-[3px] flex h-10 w-[275px] items-center rounded-full border border-[#655258] bg-[#4c3a41] pl-[13px] pr-[3px]">
          <Search size={20} strokeWidth={2} className="text-[#e6e0e2]" />
          <input aria-label="Search" placeholder="Search" className="ml-3 min-w-0 flex-1 bg-transparent text-[16px] outline-none placeholder:text-[#d3cbce]" />
          <SkylineArt />
        </div>
        {apps.map((a) => (
          <button key={a.name} aria-label={a.name} className="relative flex w-[55px] justify-center">
            <span className={"flex size-[50px] items-center justify-center rounded-md " + (a.mark === "active" ? "border border-[#46353b] bg-[#3d2c33]" : "")}>{a.icon}</span>
            {a.mark === "dot" && <span className="absolute bottom-[1px] h-1 w-2 rounded-full bg-[#9c9497]" />}
            {a.mark === "active" && <span className="absolute bottom-[1px] h-1 w-5 rounded-full bg-[#4cc2ff]" />}
          </button>
        ))}
      </div>
      <div className="flex min-w-0 flex-1 items-center justify-end pb-px pr-[25px] text-[14px] leading-5">
        <button aria-label="Hidden icons" className="flex w-[50px] justify-center"><ChevronUp size={20} strokeWidth={2} /></button>
        <span className="flex w-8 justify-center"><CloudIcon /></span>
        <span className="w-16 text-center">ENG<br />IN</span>
        <span className="flex w-[30px] justify-center"><WifiIcon /></span>
        <span className="flex w-[30px] justify-center"><VolumeIcon /></span>
        <span className="flex w-[30px] justify-center"><BatteryIcon /></span>
        <span className="w-[93px] text-right">11:51<br />17-11-2024</span>
        <button aria-label="Notifications" className="ml-[9px]"><BellIcon /></button>
      </div>
    </footer>
  );
}

export default function App() {
  return (
    <div className={"flex h-screen flex-col overflow-hidden bg-[#7034ad] " + UI}>
      <TabStrip />
      <AddressRow />
      <BookmarksBar />
      <div className={"mx-[5px] mb-[5px] flex min-h-0 flex-1 flex-col overflow-hidden rounded-[10px] bg-[#0e1117] text-[#fafafa] " + APP}>
        <div className="h-[3px] shrink-0 bg-linear-to-r from-[#ff4b4b] to-[#fffd80]" />
        <div className="flex min-h-0 flex-1">
          <Sidebar />
          <Chat />
        </div>
      </div>
      <Taskbar />
    </div>
  );
}
